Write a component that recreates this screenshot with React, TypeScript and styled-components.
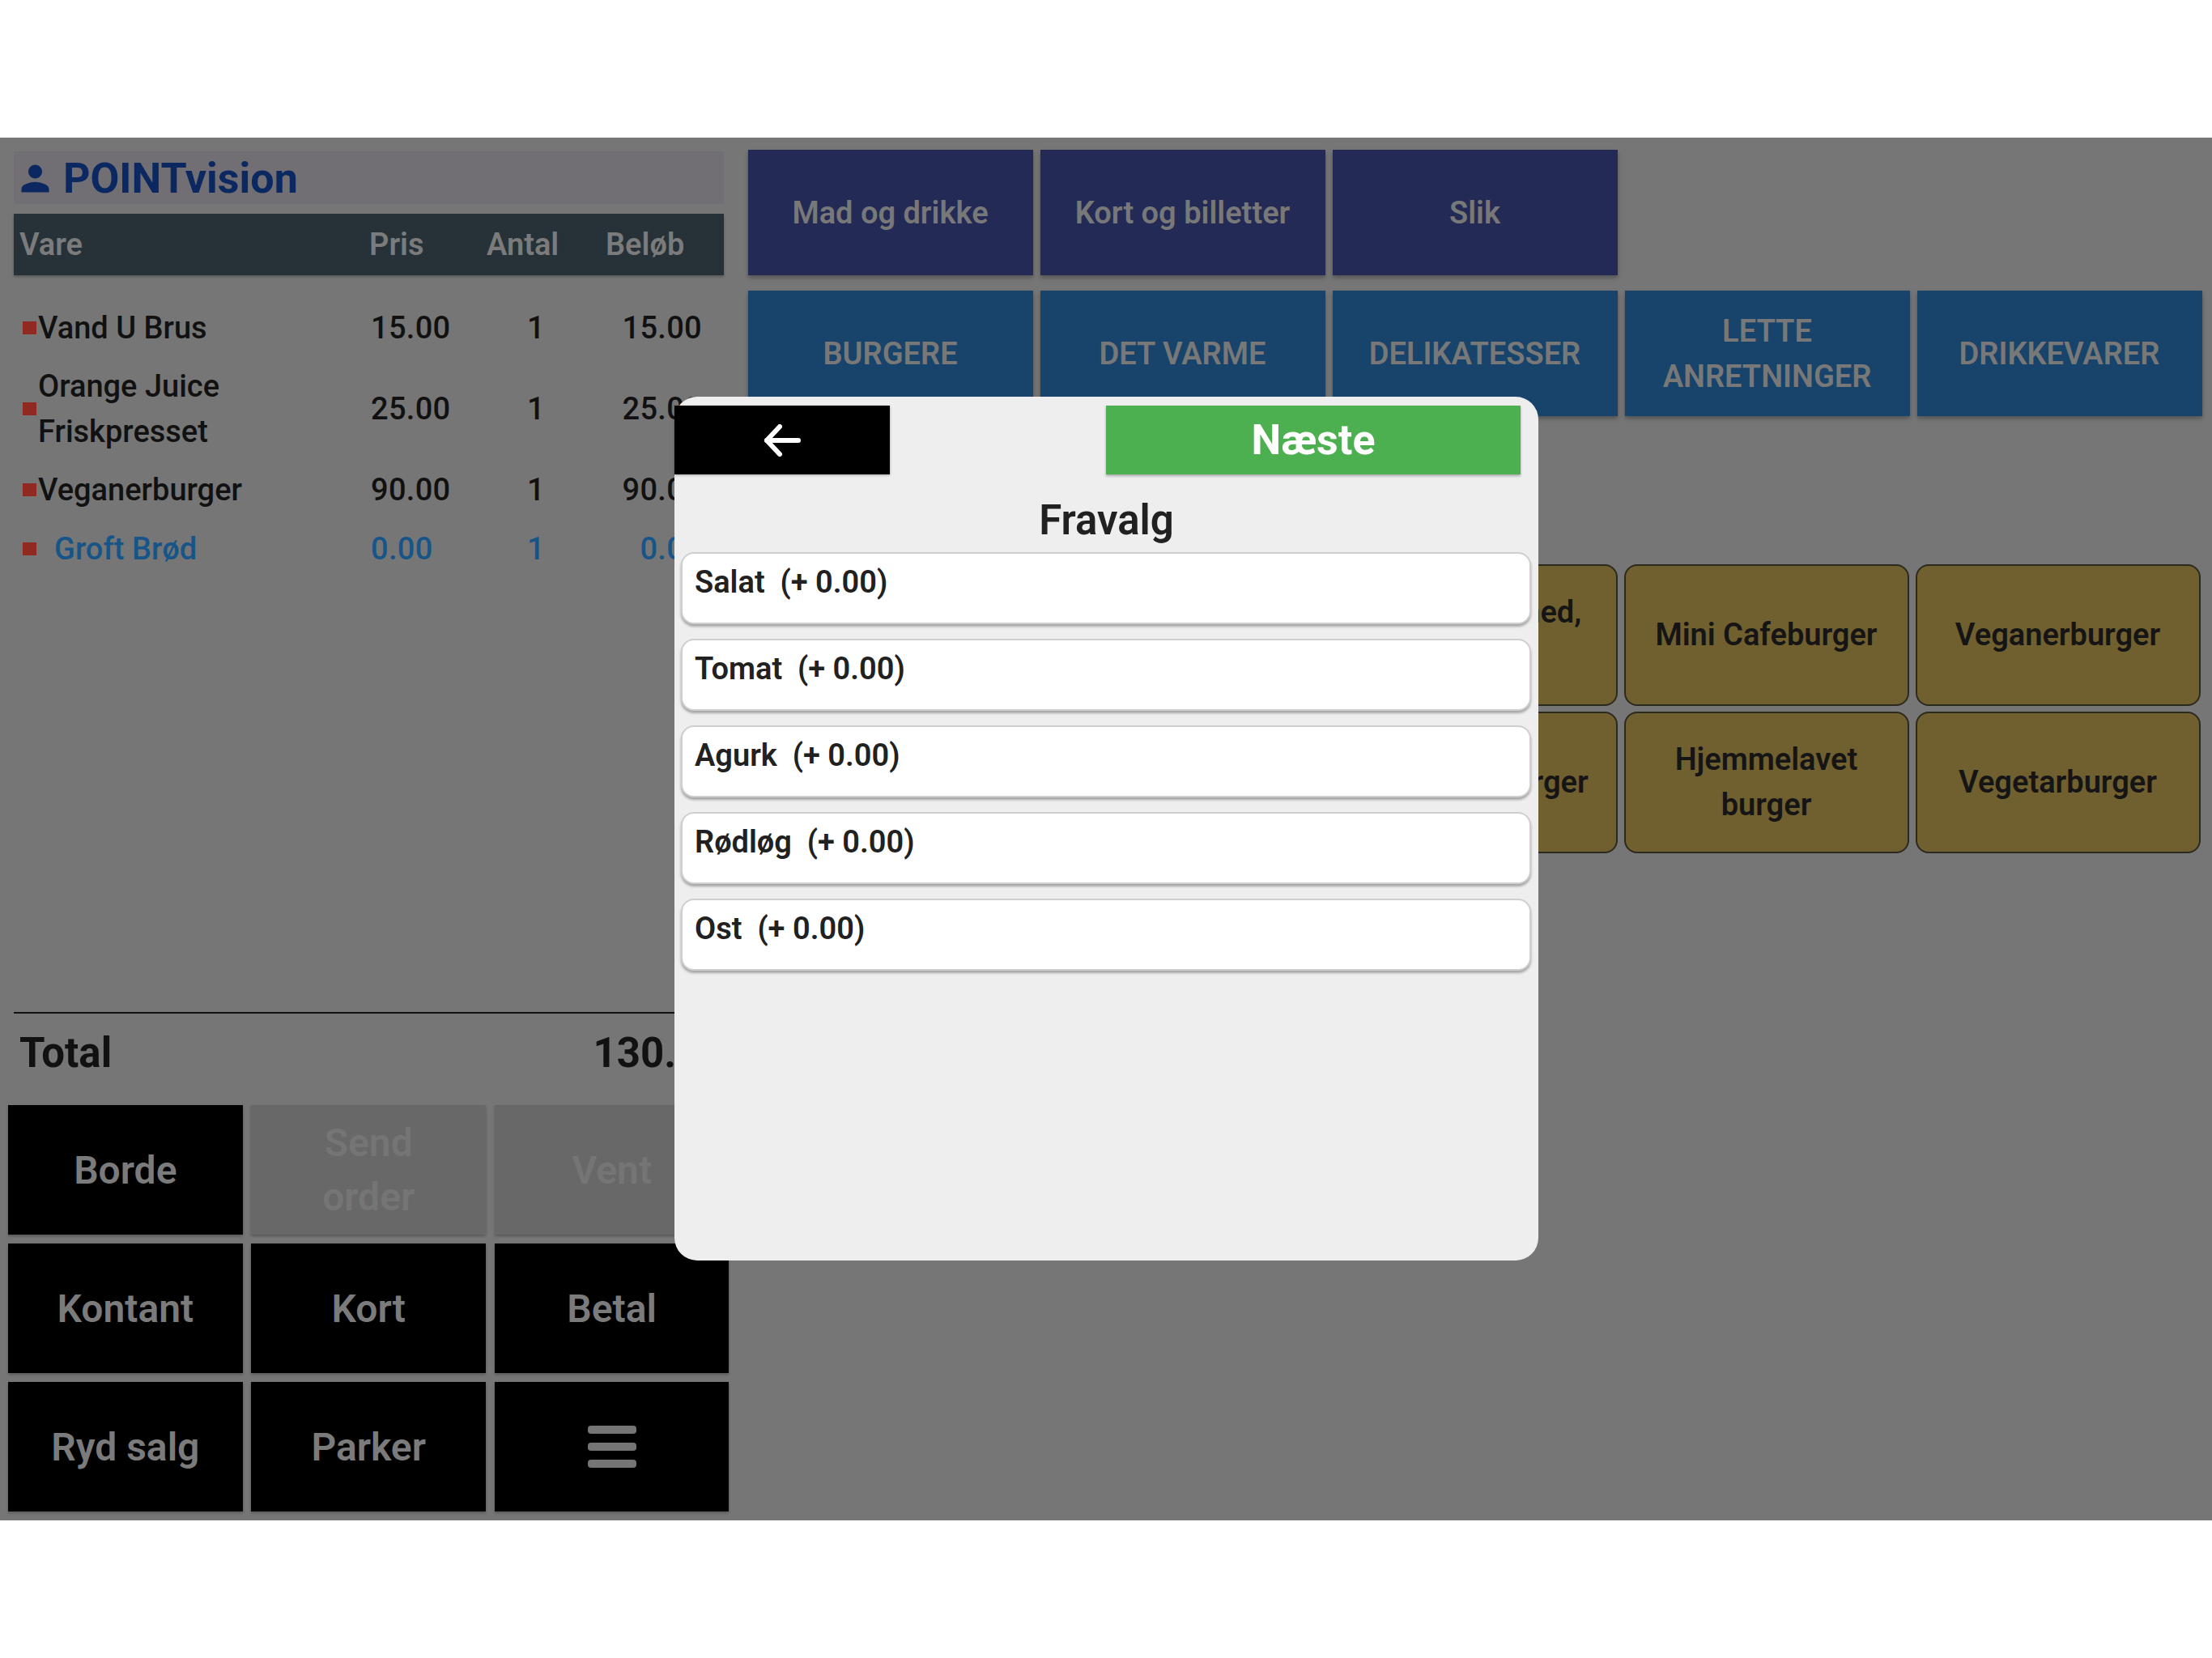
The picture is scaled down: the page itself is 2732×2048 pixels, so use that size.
import React from 'react';
import styled, { createGlobalStyle } from 'styled-components';
import { MdPerson } from 'react-icons/md';

const orderLines = [
  { name: ['Vand U Brus'], price: '15.00', qty: '1', amount: '15.00' },
  { name: ['Orange Juice', 'Friskpresset'], price: '25.00', qty: '1', amount: '25.00' },
  { name: ['Veganerburger'], price: '90.00', qty: '1', amount: '90.00' },
  { name: ['Groft Brød'], price: '0.00', qty: '1', amount: '0.00', addon: true },
];

const groups = ['Mad og drikke', 'Kort og billetter', 'Slik'];
const categories = ['BURGERE', 'DET VARME', 'DELIKATESSER', 'LETTE ANRETNINGER', 'DRIKKEVARER'];
const products = [
  'Ostburger med, bacon',
  'Mini Cafeburger',
  'Veganerburger',
  'Oksekødsburger',
  'Hjemmelavet burger',
  'Vegetarburger',
];
const options = ['Salat', 'Tomat', 'Agurk', 'Rødløg', 'Ost'];

const App = () => {
  return (
    <Page>
      <GlobalStyle />
      <Stage>
        <OrderPanel>
          <Title>
            <MdPerson size={51} />
            <span>POINTvision</span>
          </Title>
          <TableHead>
            <span>Vare</span>
            <span>Pris</span>
            <span>Antal</span>
            <span>Beløb</span>
          </TableHead>
          <OrderList>
            {orderLines.map((line) => (
              <OrderRow key={line.name[0]} $addon={line.addon}>
                <NameCell>
                  <Marker />
                  <NameText $addon={line.addon}>
                    {line.name.map((part) => (
                      <div key={part}>{part}</div>
                    ))}
                  </NameText>
                </NameCell>
                <span>{line.price}</span>
                <QtyCell>{line.qty}</QtyCell>
                <AmountCell>{line.amount}</AmountCell>
              </OrderRow>
            ))}
          </OrderList>
          <TotalRow>
            <span>Total</span>
            <span>130.00</span>
          </TotalRow>
          <ActionGrid>
            <ActionButton>Borde</ActionButton>
            <ActionButton $disabled>Send order</ActionButton>
            <ActionButton $disabled>Vent</ActionButton>
            <ActionButton>Kontant</ActionButton>
            <ActionButton>Kort</ActionButton>
            <ActionButton>Betal</ActionButton>
            <ActionButton>Ryd salg</ActionButton>
            <ActionButton>Parker</ActionButton>
            <ActionButton aria-label="Menu">
              <svg width="60" height="52" viewBox="0 0 60 52" fill="#757575">
                <rect x="0" y="0" width="60" height="10" rx="4" />
                <rect x="0" y="21" width="60" height="10" rx="4" />
                <rect x="0" y="42" width="60" height="10" rx="4" />
              </svg>
            </ActionButton>
          </ActionGrid>
        </OrderPanel>

        <MenuPanel>
          <TileRow>
            {groups.map((group) => (
              <GroupTile key={group}>{group}</GroupTile>
            ))}
          </TileRow>
          <TileRow>
            {categories.map((category) => (
              <CategoryTile key={category}>{category}</CategoryTile>
            ))}
          </TileRow>
          <ProductGrid>
            {products.map((product) => (
              <ProductTile key={product}>{product}</ProductTile>
            ))}
          </ProductGrid>
        </MenuPanel>

        <Dialog>
          <DialogBar>
            <BackButton aria-label="Tilbage">
              <svg width="46" height="40" viewBox="0 0 46 40" fill="none" stroke="#fff" strokeWidth="6" strokeLinecap="round" strokeLinejoin="round">
                <path d="M4 20H43" />
                <path d="M20 3L4 20L20 37" />
              </svg>
            </BackButton>
            <NextButton>Næste</NextButton>
          </DialogBar>
          <DialogTitle>Fravalg</DialogTitle>
          <OptionList>
            {options.map((option) => (
              <OptionRow key={option}>
                {option}
                {'\u00a0\u00a0(+ 0.00)'}
              </OptionRow>
            ))}
          </OptionList>
        </Dialog>
      </Stage>
    </Page>
  );
};

export default App;

const GlobalStyle = createGlobalStyle`
  html, body {
    margin: 0;
    padding: 0;
    background: #fff;
  }
  body {
    font-family: Roboto, "Liberation Sans", sans-serif;
  }
  * {
    box-sizing: border-box;
  }
`;

const Page = styled.div`
  width: 2732px;
  height: 2048px;
  padding-top: 170px;
  background: #fff;
`;

const Stage = styled.div`
  position: relative;
  display: flex;
  height: 1708px;
  background: #767676;
  overflow: hidden;
`;

const OrderPanel = styled.div`
  display: flex;
  flex-direction: column;
  width: 923.5px;
  padding: 17px 22px 11px 10px;
`;

const Title = styled.div`
  display: flex;
  align-items: center;
  gap: 9px;
  height: 65px;
  margin: 0 8px 12px 7px;
  padding: 1px 0 0 1px;
  background: #716f74;
  color: #0b2860;
  font-size: 52px;
  font-weight: 700;
`;

const TableHead = styled.div`
  display: grid;
  grid-template-columns: 432px 145px 147px 1fr;
  align-items: center;
  height: 76px;
  margin: 0 8px 0 7px;
  padding-left: 7px;
  background: #263238;
  color: #7b7b7b;
  font-size: 38px;
  font-weight: 600;
  box-shadow: 0 2px 3px rgba(0, 0, 0, 0.25);
`;

const OrderList = styled.div`
  flex: 1;
  margin: 28.5px 8px 0 7px;
`;

const OrderRow = styled.div<{ $addon?: boolean }>`
  display: grid;
  grid-template-columns: 430px 150px 108px 151px;
  align-items: center;
  padding: 8.2px 27px 8.2px 11px;
  color: ${(p) => (p.$addon ? '#175488' : '#111')};
  font-size: 38px;
  font-weight: 500;
  line-height: 56px;
  letter-spacing: 0.3px;
`;

const NameCell = styled.div`
  display: flex;
  align-items: center;
  letter-spacing: 0;
`;

const Marker = styled.i`
  flex: none;
  width: 17px;
  height: 16px;
  background: #902a20;
`;

const NameText = styled.div<{ $addon?: boolean }>`
  margin-left: ${(p) => (p.$addon ? '22px' : '2px')};
`;

const QtyCell = styled.span`
  text-align: center;
`;

const AmountCell = styled.span`
  text-align: right;
`;

const TotalRow = styled.div`
  display: flex;
  align-items: center;
  justify-content: space-between;
  height: 99.5px;
  margin: 0 8px 16px 7px;
  padding: 0 0 0 7px;
  border-top: 2px solid #111;
  color: #111;
  font-size: 51px;
  font-weight: 700;
`;

const ActionGrid = styled.div`
  display: grid;
  grid-template-columns: repeat(3, 289.6px);
  grid-auto-rows: 160px;
  gap: 10.8px;
`;

const ActionButton = styled.button<{ $disabled?: boolean }>`
  display: flex;
  align-items: center;
  justify-content: center;
  padding: 0 50px;
  border: none;
  background: ${(p) => (p.$disabled ? '#686868' : '#000')};
  color: ${(p) => (p.$disabled ? '#757575' : '#7b7b7b')};
  font-family: inherit;
  font-size: 48px;
  font-weight: 600;
  line-height: 67px;
  box-shadow: 0 2px 3px rgba(0, 0, 0, 0.25);
`;

const MenuPanel = styled.div`
  display: flex;
  flex-direction: column;
  flex: 1;
  padding-top: 15px;
`;

const TileRow = styled.div`
  display: grid;
  grid-template-columns: repeat(5, 352px);
  gap: 9px;
  margin-bottom: 19px;
`;

const Tile = styled.button`
  display: flex;
  align-items: center;
  justify-content: center;
  height: 155px;
  padding: 0 10px;
  border: none;
  color: #787878;
  font-family: inherit;
  font-size: 38px;
  font-weight: 600;
  line-height: 56px;
  box-shadow: 0 3px 5px rgba(0, 0, 0, 0.3);
`;

const GroupTile = styled(Tile)`
  background: #232a56;
`;

const CategoryTile = styled(Tile)`
  background: #18446b;
`;

const ProductGrid = styled.div`
  display: grid;
  grid-template-columns: repeat(3, 352px);
  grid-auto-rows: 174.5px;
  gap: 7.5px 8px;
  margin: 164px 14.5px 0 auto;
`;

const ProductTile = styled.button`
  display: flex;
  align-items: center;
  justify-content: center;
  padding: 0 24px;
  border: 2px solid #2c2a1e;
  border-radius: 16px;
  background: #705f2f;
  color: #151515;
  font-family: inherit;
  font-size: 38px;
  font-weight: 600;
  line-height: 56px;
`;

const Dialog = styled.div`
  position: absolute;
  top: 320px;
  left: 833px;
  display: flex;
  flex-direction: column;
  width: 1067px;
  height: 1067px;
  padding-top: 11px;
  border-radius: 28px;
  background: #eeeeee;
`;

const DialogBar = styled.div`
  display: flex;
  justify-content: space-between;
  height: 85px;
  padding-right: 22px;
`;

const BackButton = styled.button`
  display: flex;
  align-items: center;
  justify-content: center;
  width: 266px;
  border: none;
  background: #000;
  box-shadow: 0 1px 3px rgba(0, 0, 0, 0.3);
`;

const NextButton = styled.button`
  width: 512px;
  border: none;
  background: #4caf50;
  color: #fff;
  font-family: inherit;
  font-size: 52px;
  font-weight: 700;
  box-shadow: 0 2px 3px rgba(0, 0, 0, 0.3);
`;

const DialogTitle = styled.h2`
  margin: 0;
  height: 96px;
  color: #212121;
  font-size: 51px;
  font-weight: 600;
  line-height: 113px;
  text-align: center;
`;

const OptionList = styled.div`
  display: flex;
  flex-direction: column;
  gap: 18px;
  padding: 0 9px 0 8px;
`;

const OptionRow = styled.div`
  height: 89px;
  padding: 7px 15px;
  border: 2px solid #cfcfcf;
  border-radius: 16px;
  background: #fff;
  color: #212121;
  font-size: 38px;
  font-weight: 600;
  line-height: 56px;
  box-shadow: 0 3px 3px rgba(0, 0, 0, 0.3);
`;
